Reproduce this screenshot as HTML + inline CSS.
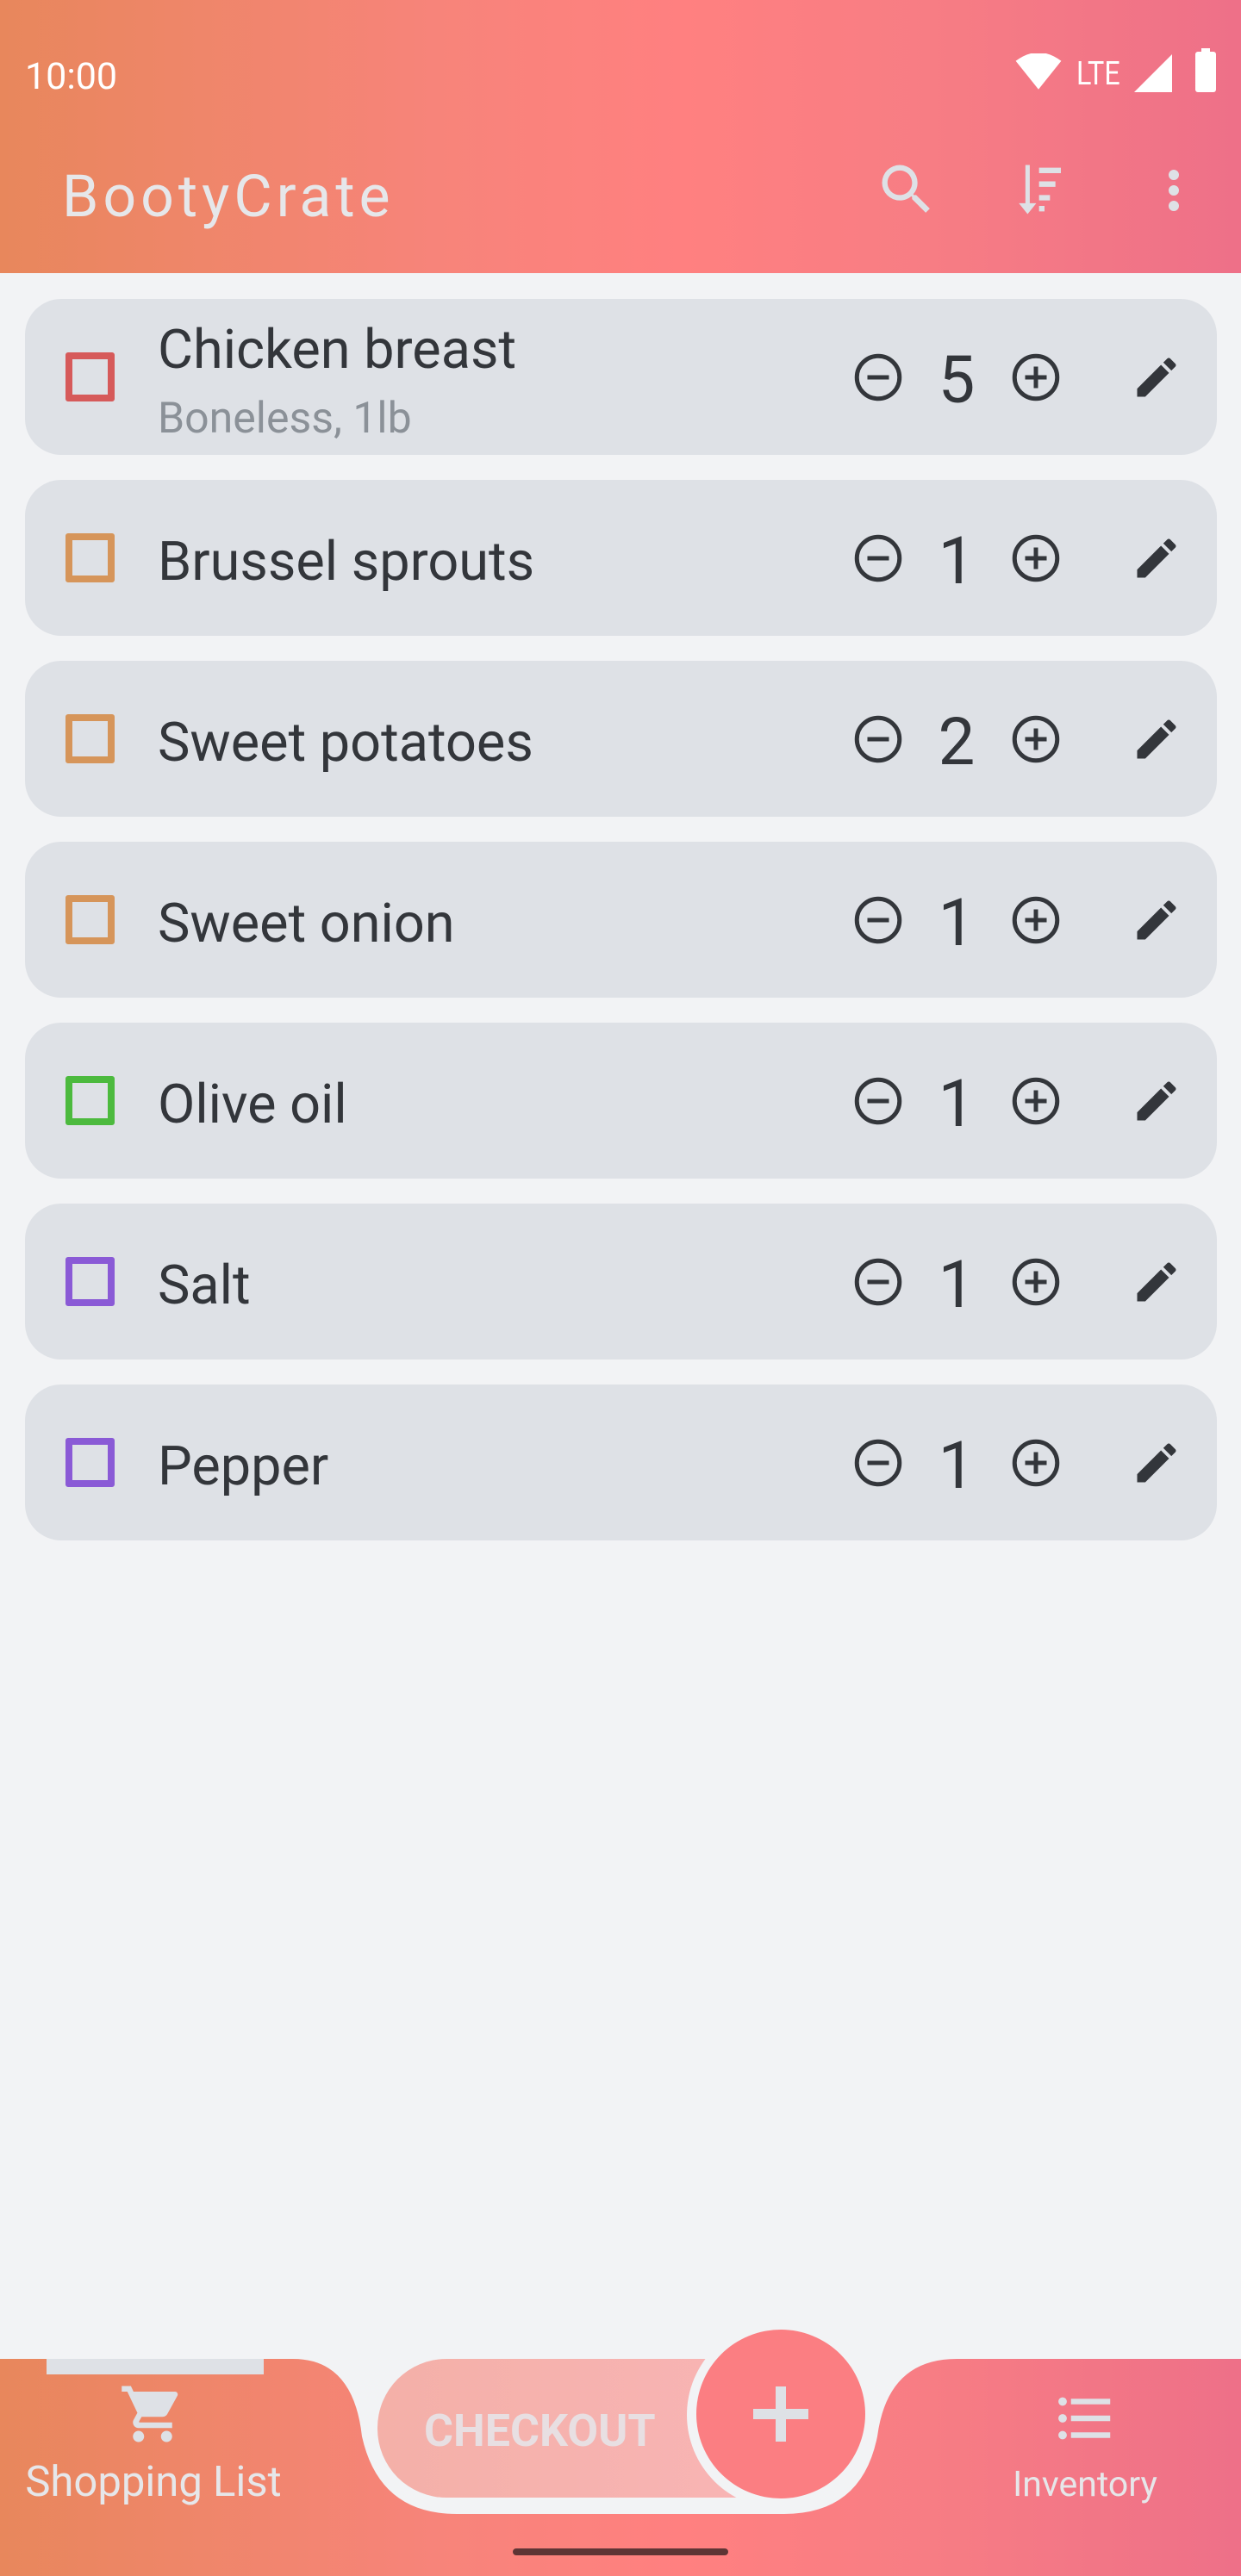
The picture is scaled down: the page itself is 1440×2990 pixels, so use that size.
<!DOCTYPE html>
<html><head><meta charset="utf-8"><style>
*{margin:0;padding:0;box-sizing:border-box}
body{width:1440px;height:2990px;background:#f2f3f5;position:relative;overflow:hidden;font-family:"Roboto","Liberation Sans",sans-serif;color:#33363b}
.grad{background:linear-gradient(90deg,#e8875c 0%,#f7847a 35%,#ff8080 55%,#f77d84 75%,#ee7088 100%)}
#top{position:absolute;left:0;top:0;width:1440px;height:317px}
.time{position:absolute;left:29px;top:64px;font-size:43px;color:#fff}
.title{position:absolute;left:72px;top:188px;font-size:68px;color:#e6e7ea;letter-spacing:5px}
.card{position:absolute;left:29px;width:1383px;height:181px;background:#dee1e6;border-radius:42px}
.cb{position:absolute;left:47px;top:62px;width:57px;height:57px;border:8px solid;border-radius:3px}
.name{position:absolute;left:154px;top:64px;font-size:63px;line-height:63px}
.sub{position:absolute;left:154px;top:110px;font-size:50px;color:#8b9198}
.ic{position:absolute;top:61px;width:60px;height:60px}
.cnt{position:absolute;left:1051px;width:60px;text-align:center;top:54px;font-size:76px;line-height:80px}
#bar{position:absolute;left:0;top:2738px;width:1440px;height:252px}
</style></head><body>
<div id="top" class="grad">
<div class="time">10:00</div>
<svg style="position:absolute;left:1178px;top:62px" width="54" height="44" viewBox="0 0 24 20"><path d="M12 19L0 4Q12-5 24 4z" fill="#fff"/></svg>
<div style="position:absolute;left:1249px;top:64px;font-size:38px;color:#fff;transform:scaleX(.85);transform-origin:left">LTE</div>
<svg style="position:absolute;left:1316px;top:63px" width="44" height="44"><path d="M44 0V44H0z" fill="#fff"/></svg>
<div style="position:absolute;left:1387px;top:60px;width:24px;height:47px;background:#fff;border-radius:3px"></div>
<div style="position:absolute;left:1394px;top:56px;width:10px;height:6px;background:#fff"></div>
<div class="title">BootyCrate</div>
<svg style="position:absolute;left:1014px;top:182px" width="76" height="76" viewBox="0 0 24 24"><path fill="#dee1e6" d="M15.5 14h-.79l-.28-.27A6.47 6.47 0 0016 9.5 6.5 6.5 0 109.5 16c1.61 0 3.09-.59 4.23-1.57l.27.28v.79l5 4.99L20.49 19l-4.99-5zm-6 0C7.01 14 5 11.99 5 9.5S7.01 5 9.5 5 14 7.01 14 9.5 11.99 14 9.5 14z"/></svg>
<svg style="position:absolute;left:1174px;top:182px" width="76" height="76" viewBox="0 0 24 24"><path fill="#dee1e6" d="M5 3h1.6v14H9l-3.2 4-3.2-4H5zM10 4h8v2h-8zM10 9h6v2h-6zM10 14h4v2h-4zM10 18h2v2h-2z"/></svg>
<svg style="position:absolute;left:1326px;top:185px" width="72" height="72" viewBox="0 0 24 24"><path fill="#dee1e6" d="M12 8a2 2 0 100-4 2 2 0 000 4zm0 2a2 2 0 100 4 2 2 0 000-4zm0 6a2 2 0 100 4 2 2 0 000-4z"/></svg>
</div>

<svg width="0" height="0" style="position:absolute"><defs>
<symbol id="minus" viewBox="0 0 24 24"><circle cx="12" cy="12" r="9.9" fill="none" stroke="#33363b" stroke-width="2"/><path d="M7 11h10v2H7z" fill="#33363b"/></symbol>
<symbol id="plus" viewBox="0 0 24 24"><circle cx="12" cy="12" r="9.9" fill="none" stroke="#33363b" stroke-width="2"/><path d="M11 7h2v4h4v2h-4v4h-2v-4H7v-2h4z" fill="#33363b"/></symbol>
<symbol id="pen" viewBox="0 0 24 24"><path fill="#33363b" d="M3 17.25V21h3.75L17.81 9.94l-3.75-3.75L3 17.25zM20.71 7.04a1 1 0 000-1.41l-2.34-2.34a1 1 0 00-1.41 0l-1.83 1.83 3.75 3.75 1.83-1.83z"/></symbol>
</defs></svg>

<div class="card" style="top:347px"><div class="cb" style="border-color:#d65a5a"></div><div class="name" style="top:28px">Chicken breast</div><div class="sub">Boneless, 1lb</div><svg class="ic" style="left:960px"><use href="#minus"/></svg><div class="cnt">5</div><svg class="ic" style="left:1143px"><use href="#plus"/></svg><svg class="ic" style="left:1283px"><use href="#pen"/></svg></div>
<div class="card" style="top:557px"><div class="cb" style="border-color:#d6955a"></div><div class="name">Brussel sprouts</div><svg class="ic" style="left:960px"><use href="#minus"/></svg><div class="cnt">1</div><svg class="ic" style="left:1143px"><use href="#plus"/></svg><svg class="ic" style="left:1283px"><use href="#pen"/></svg></div>
<div class="card" style="top:767px"><div class="cb" style="border-color:#d6955a"></div><div class="name">Sweet potatoes</div><svg class="ic" style="left:960px"><use href="#minus"/></svg><div class="cnt">2</div><svg class="ic" style="left:1143px"><use href="#plus"/></svg><svg class="ic" style="left:1283px"><use href="#pen"/></svg></div>
<div class="card" style="top:977px"><div class="cb" style="border-color:#d6955a"></div><div class="name">Sweet onion</div><svg class="ic" style="left:960px"><use href="#minus"/></svg><div class="cnt">1</div><svg class="ic" style="left:1143px"><use href="#plus"/></svg><svg class="ic" style="left:1283px"><use href="#pen"/></svg></div>
<div class="card" style="top:1187px"><div class="cb" style="border-color:#4cba3e"></div><div class="name">Olive oil</div><svg class="ic" style="left:960px"><use href="#minus"/></svg><div class="cnt">1</div><svg class="ic" style="left:1143px"><use href="#plus"/></svg><svg class="ic" style="left:1283px"><use href="#pen"/></svg></div>
<div class="card" style="top:1397px"><div class="cb" style="border-color:#8a5ad6"></div><div class="name">Salt</div><svg class="ic" style="left:960px"><use href="#minus"/></svg><div class="cnt">1</div><svg class="ic" style="left:1143px"><use href="#plus"/></svg><svg class="ic" style="left:1283px"><use href="#pen"/></svg></div>
<div class="card" style="top:1607px"><div class="cb" style="border-color:#8a5ad6"></div><div class="name">Pepper</div><svg class="ic" style="left:960px"><use href="#minus"/></svg><div class="cnt">1</div><svg class="ic" style="left:1143px"><use href="#plus"/></svg><svg class="ic" style="left:1283px"><use href="#pen"/></svg></div>

<div id="bar" class="grad"></div>
<svg style="position:absolute;left:0;top:2738px" width="1440" height="200"><path d="M340 0 Q410 0 420 90 Q440 180 530 180 L910 180 Q1000 180 1018 90 Q1030 0 1110 0 Z" fill="#f2f3f5"/></svg>
<div style="position:absolute;left:438px;top:2738px;width:420px;height:161px;border-radius:80px 0 0 80px;background:linear-gradient(90deg,#f4b0a8,#f8b4b4)"></div>
<div style="position:absolute;left:492px;top:2791px;font-size:52px;font-weight:bold;color:#e8dfe2">CHECKOUT</div>
<div style="position:absolute;left:797px;top:2694px;width:218px;height:218px;border-radius:50%;background:#f2f3f5"></div>
<div style="position:absolute;left:808px;top:2704px;width:196px;height:196px;border-radius:50%;background:#fb7e82"></div>
<div style="position:absolute;left:874px;top:2796px;width:64px;height:12px;background:#dee1e6"></div>
<div style="position:absolute;left:900px;top:2770px;width:12px;height:64px;background:#dee1e6"></div>
<div style="position:absolute;left:54px;top:2738px;width:252px;height:18px;background:#dee1e6"></div>
<svg style="position:absolute;left:138px;top:2763px" width="78" height="78" viewBox="0 0 24 24"><path fill="#dee1e6" d="M7 18c-1.1 0-2 .9-2 2s.9 2 2 2 2-.9 2-2-.9-2-2-2zM1 2v2h2l3.6 7.59-1.35 2.45c-.16.28-.25.61-.25.96 0 1.1.9 2 2 2h12v-2H7.42c-.14 0-.25-.11-.25-.25l.03-.12.9-1.63h7.45c.75 0 1.41-.41 1.750-1.03l3.58-6.49A1 1 0 0020 4H5.21l-.94-2H1zm16 16c-1.1 0-2 .9-2 2s.9 2 2 2 2-.9 2-2-.9-2-2-2z"/></svg>
<div style="position:absolute;left:0;width:356px;text-align:center;top:2852px;font-size:49px;color:#e6e7ea">Shopping List</div>
<svg style="position:absolute;left:1220px;top:2768px" width="78" height="78" viewBox="0 0 24 24"><path fill="#dee1e6" d="M4 10.5c-.83 0-1.5.67-1.5 1.5s.67 1.5 1.5 1.5 1.5-.67 1.5-1.5-.67-1.5-1.5-1.5zm0-6c-.83 0-1.5.67-1.5 1.5S3.17 7.5 4 7.5 5.5 6.83 5.5 6 4.83 4.5 4 4.5zm0 12c-.83 0-1.5.68-1.5 1.5s.68 1.5 1.5 1.5 1.5-.68 1.5-1.5-.67-1.5-1.5-1.5zM7 19h14v-2H7v2zm0-6h14v-2H7v2zm0-8v2h14V5H7z"/></svg>
<div style="position:absolute;left:1140px;width:238px;text-align:center;top:2860px;font-size:41px;color:#e6e7ea">Inventory</div>
<div style="position:absolute;left:595px;top:2958px;width:250px;height:8px;border-radius:4px;background:#5e3535"></div>
</body></html>
